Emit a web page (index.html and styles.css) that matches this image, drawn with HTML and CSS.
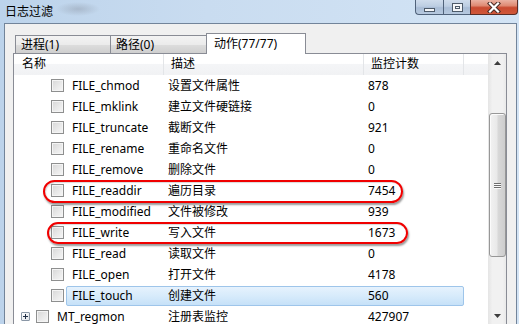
FILE: index.html
```html
<!DOCTYPE html>
<html lang="zh">
<head>
<meta charset="utf-8">
<title>日志过滤</title>
<link rel="stylesheet" href="styles.css">
</head>
<body>
<div class="window">
  <div class="titlebar">
    <span class="title">日志过滤</span>
    <div class="caption-btns">
      <div class="cb cb-min"><span class="min-glyph"></span></div>
      <div class="cb cb-max"><span class="max-glyph"></span></div>
      <div class="cb cb-close">
        <svg width="14" height="11" viewBox="0 0 14 11">
          <path d="M3 1.5 L11 9.5 M11 1.5 L3 9.5" stroke="#4a2c26" stroke-width="4.2" stroke-linecap="square" fill="none"/>
          <path d="M3 1.5 L11 9.5 M11 1.5 L3 9.5" stroke="#ffffff" stroke-width="2.2" stroke-linecap="square" fill="none"/>
        </svg>
      </div>
    </div>
  </div>
  <div class="client">
    <div class="tabs">
      <div class="tab tab-first">进程(1)</div>
      <div class="tab">路径(0)</div>
      <div class="tab active">动作(77/77)</div>
    </div>
    <div class="panel">
      <div class="list-main">
        <div class="header">
          <div class="hcell hc-name">名称</div>
          <div class="hcell hc-desc">描述</div>
          <div class="hcell hc-count">监控计数</div>
          <div class="hcell hc-fill"></div>
        </div>
        <div class="rows">
          <div class="row child"><span class="check"></span><div class="item"><span class="c-name">FILE_chmod</span><span class="c-desc">设置文件属性</span><span class="c-count">878</span></div></div>
          <div class="row child"><span class="check"></span><div class="item"><span class="c-name">FILE_mklink</span><span class="c-desc">建立文件硬链接</span><span class="c-count">0</span></div></div>
          <div class="row child"><span class="check"></span><div class="item"><span class="c-name">FILE_truncate</span><span class="c-desc">截断文件</span><span class="c-count">921</span></div></div>
          <div class="row child"><span class="check"></span><div class="item"><span class="c-name">FILE_rename</span><span class="c-desc">重命名文件</span><span class="c-count">0</span></div></div>
          <div class="row child"><span class="check"></span><div class="item"><span class="c-name">FILE_remove</span><span class="c-desc">删除文件</span><span class="c-count">0</span></div></div>
          <div class="row child"><span class="check"></span><div class="item"><span class="c-name">FILE_readdir</span><span class="c-desc">遍历目录</span><span class="c-count">7454</span></div></div>
          <div class="row child"><span class="check"></span><div class="item"><span class="c-name">FILE_modified</span><span class="c-desc">文件被修改</span><span class="c-count">939</span></div></div>
          <div class="row child"><span class="check"></span><div class="item"><span class="c-name">FILE_write</span><span class="c-desc">写入文件</span><span class="c-count">1673</span></div></div>
          <div class="row child"><span class="check"></span><div class="item"><span class="c-name">FILE_read</span><span class="c-desc">读取文件</span><span class="c-count">0</span></div></div>
          <div class="row child"><span class="check"></span><div class="item"><span class="c-name">FILE_open</span><span class="c-desc">打开文件</span><span class="c-count">4178</span></div></div>
          <div class="row child"><span class="check"></span><div class="item selected"><span class="c-name">FILE_touch</span><span class="c-desc">创建文件</span><span class="c-count">560</span></div></div>
          <div class="row parent"><span class="expander"><span class="plus-h"></span><span class="plus-v"></span></span><span class="check"></span><div class="item"><span class="c-name">MT_regmon</span><span class="c-desc">注册表监控</span><span class="c-count">427907</span></div></div>
          <div class="oval oval-readdir"></div>
          <div class="oval oval-write"></div>
        </div>
      </div>
      <div class="scrollbar">
        <div class="sb-arrow">
          <svg width="7" height="4" viewBox="0 0 7 4"><polygon points="0,4 7,4 3.5,0" fill="#3d3d3d"/></svg>
        </div>
        <div class="sb-thumb">
          <span class="grip"></span><span class="grip"></span><span class="grip"></span>
        </div>
        <div class="sb-track"></div>
        <div class="sb-arrow">
          <svg width="7" height="4" viewBox="0 0 7 4"><polygon points="0,0 7,0 3.5,4" fill="#3d3d3d"/></svg>
        </div>
      </div>
    </div>
  </div>
</div>
</body>
</html>
```
FILE: styles.css
```css
* { box-sizing: border-box; }
html, body {
  margin: 0;
  padding: 0;
  width: 519px;
  height: 324px;
  overflow: hidden;
}
body {
  font-family: "Noto Sans", "Noto Sans CJK SC", sans-serif;
  font-size: 12px;
  color: #000;
  background: #c6daef;
}
.window {
  display: flex;
  flex-direction: column;
  width: 519px;
  height: 324px;
  background:
    radial-gradient(ellipse 22px 7px at 78px 9px, rgba(140,150,165,0.45), rgba(140,150,165,0) 100%),
    linear-gradient(90deg, #bcd3eb 0%, #c9dcf0 40%, #d3e4f5 100%);
}
.titlebar {
  height: 23px;
  display: flex;
  align-items: flex-start;
  flex: 0 0 auto;
}
.title {
  padding: 4px 0 0 5px;
  line-height: 16px;
  color: #000;
}
.caption-btns {
  margin-left: auto;
  margin-right: 1px;
  display: flex;
  height: 15px;
}
.cb {
  height: 15px;
  border: 1px solid #50627a;
  border-top: none;
  display: flex;
  align-items: center;
  justify-content: center;
  background: linear-gradient(#cfdcec 0%, #bccde2 45%, #a9bdd6 55%, #b7c9df 100%);
}
.cb-min {
  width: 28px;
  border-bottom-left-radius: 4px;
  border-right: none;
}
.cb-max {
  width: 27px;
  border-right: none;
}
.cb-close {
  width: 48px;
  border-bottom-right-radius: 4px;
  border-color: #5a2d26;
  background: linear-gradient(#eab2a3 0%, #df8a73 40%, #c94a30 55%, #d0583a 100%);
}
.min-glyph {
  width: 11px;
  height: 4px;
  margin-top: 6px;
  background: #f4f6f9;
  border: 1px solid #4d5a6a;
}
.max-glyph {
  width: 11px;
  height: 9px;
  border: 1px solid #4d5a6a;
  background: #f4f6f9;
  box-shadow: inset 0 0 0 2px #f4f6f9, inset 0 0 0 3px #4d5a6a;
}
.client {
  flex: 1 1 auto;
  min-height: 0;
  margin: 0 2px 0 4px;
  background: #f0f0f0;
  border: 1px solid #72849a;
  border-bottom: none;
  display: flex;
  flex-direction: column;
}
.tabs {
  display: flex;
  align-items: flex-end;
  padding: 9px 0 0 10px;
  flex: 0 0 auto;
}
.tab {
  height: 18px;
  width: 96px;
  border: 1px solid #898c95;
  border-bottom: none;
  background: linear-gradient(#f3f3f3 0%, #ebebeb 50%, #dddddd 51%, #cfcfcf 100%);
  padding-left: 5px;
  line-height: 17px;
  white-space: nowrap;
}
.tab + .tab { border-left: none; }
.tab.active {
  position: relative;
  z-index: 1;
  height: 21px;
  width: 100px;
  margin-left: -1px;
  margin-bottom: -1px;
  border-left: 1px solid #898c95;
  background: #fff;
  padding-left: 7px;
  line-height: 19px;
}
.panel {
  flex: 1 1 auto;
  min-height: 0;
  margin: 0 9px 0 8px;
  border: 1px solid #898c95;
  border-bottom: none;
  background: #fff;
  display: flex;
  overflow: hidden;
}
.list-main {
  width: 474px;
  display: flex;
  flex-direction: column;
  overflow: hidden;
}
.header {
  display: flex;
  height: 21px;
  flex: 0 0 21px;
  background: linear-gradient(#ffffff 0%, #ffffff 45%, #f4f5f7 50%, #f1f2f4 100%);
}
.hcell {
  line-height: 20px;
  border-right: 1px solid #e3e5e8;
  padding-left: 7px;
}
.hc-name { width: 150px; padding-left: 8px; }
.hc-desc { width: 200px; }
.hc-count { width: 100px; }
.hc-fill { flex: 1; border-right: none; }
.rows {
  position: relative;
  display: flex;
  flex-direction: column;
  flex: 0 0 auto;
}
.row {
  height: 21px;
  flex: 0 0 21px;
  display: flex;
  align-items: center;
  white-space: nowrap;
}
.row.child { padding-left: 37px; }
.row.parent { padding-left: 7px; }
.check {
  width: 13px;
  height: 13px;
  flex: 0 0 13px;
  border: 1px solid #8e8f8f;
  background: linear-gradient(135deg, #d6d6d6 0%, #e9e9e9 55%, #f6f6f6 100%);
  box-shadow: inset 0 0 0 1px #f4f4f4;
  margin-top: -1px;
  margin-right: 2px;
}
.expander {
  position: relative;
  width: 9px;
  height: 9px;
  flex: 0 0 9px;
  border: 1px solid #8a97a6;
  border-radius: 1px;
  background: linear-gradient(135deg, #ffffff, #dfe3e8);
  margin-right: 6px;
}
.plus-h {
  position: absolute;
  left: 1px;
  top: 3px;
  width: 5px;
  height: 1px;
  background: #1f2e44;
}
.plus-v {
  position: absolute;
  left: 3px;
  top: 1px;
  width: 1px;
  height: 5px;
  background: #1f2e44;
}
.item {
  display: flex;
  height: 21px;
  align-items: center;
  line-height: 19px;
  border: 1px solid transparent;
  border-radius: 2px;
}
.item.selected {
  height: 20px;
  background: linear-gradient(#e6f2fd 0%, #d7ebfb 50%, #c6e1f8 100%);
  border-color: #9ec5ea;
}
.c-name { width: 97px; padding-left: 5px; }
.parent .c-name { width: 112px; }
.c-desc { width: 200px; padding-left: 4px; }
.c-count { width: 99px; padding-left: 4px; }
.oval {
  position: absolute;
  border: 2px solid #f00000;
  border-radius: 12px;
  box-shadow: 1px 2px 2px rgba(0,0,0,0.4), inset 1px 1px 1px rgba(0,0,0,0.15);
  pointer-events: none;
}
.oval-readdir { left: 29px; top: 105px; width: 360px; height: 23px; }
.oval-write { left: 33px; top: 147px; width: 361px; height: 22px; }
.scrollbar {
  width: 18px;
  display: flex;
  flex-direction: column;
  background: linear-gradient(90deg, #e7e7e7 0%, #f1f1f1 20%, #f1f1f1 80%, #e9e9e9 100%);
  border-left: 1px solid #e6e6e6;
}
.sb-arrow {
  height: 17px;
  flex: 0 0 17px;
  display: flex;
  align-items: center;
  justify-content: center;
}
.sb-thumb {
  margin: 42px 0 0 0;
  height: 144px;
  flex: 0 0 144px;
  border: 1px solid #979797;
  border-radius: 3px;
  background: linear-gradient(90deg, #f2f2f2 0%, #e9e9e9 45%, #d8d8d8 55%, #cdcdcd 100%);
  box-shadow: inset 1px 1px 0 #fbfbfb;
  display: flex;
  flex-direction: column;
  align-items: center;
  justify-content: center;
  gap: 1px;
}
.grip {
  width: 7px;
  height: 1px;
  background: #6e6e6e;
  box-shadow: 0 1px 0 #fafafa;
}
.sb-track { flex: 1 1 auto; }
```
